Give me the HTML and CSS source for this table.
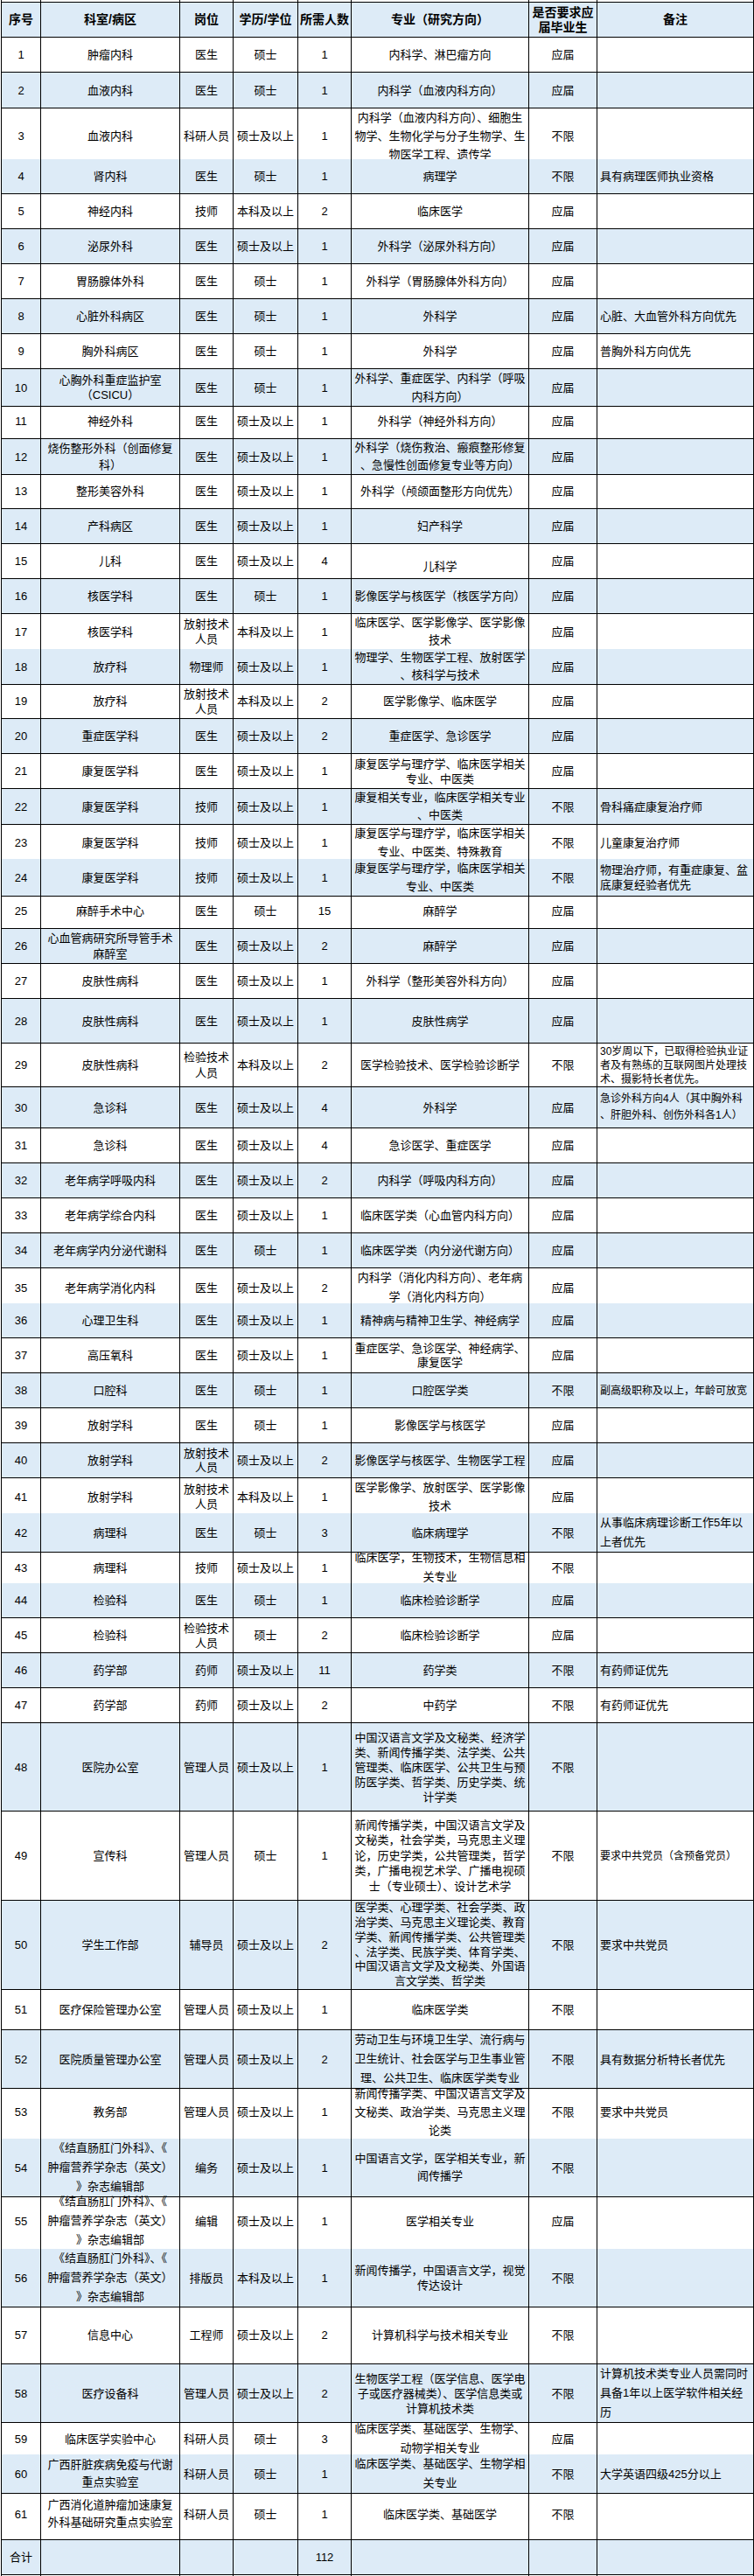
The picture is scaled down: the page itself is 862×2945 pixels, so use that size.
FILE: index.html
```
<!DOCTYPE html>
<html lang="zh-CN">
<head>
<meta charset="utf-8">
<title>招聘岗位表</title>
<link rel="stylesheet" href="styles.css">
</head>
<body>
<div class="sheet">
<div class="row stub"><div></div><div></div><div></div><div></div><div></div><div></div><div></div><div></div></div>
<div class="row b hd"><div>序号</div><div>科室/病区</div><div>岗位</div><div>学历/学位</div><div>所需人数</div><div>专业（研究方向）</div><div><span>是否要求应<br>届毕业生</span></div><div>备注</div></div>
<div class="row"><div>1</div><div>肿瘤内科</div><div>医生</div><div>硕士</div><div>1</div><div>内科学、淋巴瘤方向</div><div>应届</div><div class="rm"></div></div>
<div class="row b h41"><div>2</div><div>血液内科</div><div>医生</div><div>硕士</div><div>1</div><div>内科学（血液内科方向）</div><div>应届</div><div class="rm"></div></div>
<div class="row h58"><div>3</div><div>血液内科</div><div>科研人员</div><div>硕士及以上</div><div>1</div><div class="l21"><span>内科学（血液内科方向）、细胞生<br>物学、生物化学与分子生物学、生<br>物医学工程、遗传学</span></div><div>不限</div><div class="rm"></div></div>
<div class="row b"><div>4</div><div>肾内科</div><div>医生</div><div>硕士</div><div>1</div><div>病理学</div><div>不限</div><div class="rm">具有病理医师执业资格</div></div>
<div class="row"><div>5</div><div>神经内科</div><div>技师</div><div>本科及以上</div><div>2</div><div>临床医学</div><div>应届</div><div class="rm"></div></div>
<div class="row b"><div>6</div><div>泌尿外科</div><div>医生</div><div>硕士及以上</div><div>1</div><div>外科学（泌尿外科方向）</div><div>应届</div><div class="rm"></div></div>
<div class="row"><div>7</div><div>胃肠腺体外科</div><div>医生</div><div>硕士</div><div>1</div><div>外科学（胃肠腺体外科方向）</div><div>应届</div><div class="rm"></div></div>
<div class="row b"><div>8</div><div>心脏外科病区</div><div>医生</div><div>硕士</div><div>1</div><div>外科学</div><div>应届</div><div class="rm">心脏、大血管外科方向优先</div></div>
<div class="row"><div>9</div><div>胸外科病区</div><div>医生</div><div>硕士</div><div>1</div><div>外科学</div><div>应届</div><div class="rm">普胸外科方向优先</div></div>
<div class="row b"><div>10</div><div><span>心胸外科重症监护室<br>（CSICU）</span></div><div>医生</div><div>硕士</div><div>1</div><div class="l21"><span>外科学、重症医学、内科学（呼吸<br>内科方向）</span></div><div>应届</div><div class="rm"></div></div>
<div class="row"><div>11</div><div>神经外科</div><div>医生</div><div>硕士及以上</div><div>1</div><div>外科学（神经外科方向）</div><div>应届</div><div class="rm"></div></div>
<div class="row b"><div>12</div><div class="l19"><span>烧伤整形外科（创面修复<br>科）</span></div><div>医生</div><div>硕士及以上</div><div>1</div><div class="l20"><span>外科学（烧伤救治、瘢痕整形修复<br>、急慢性创面修复专业等方向）</span></div><div>应届</div><div class="rm"></div></div>
<div class="row"><div>13</div><div>整形美容外科</div><div>医生</div><div>硕士及以上</div><div>1</div><div>外科学（颅颌面整形方向优先）</div><div>应届</div><div class="rm"></div></div>
<div class="row b"><div>14</div><div>产科病区</div><div>医生</div><div>硕士及以上</div><div>1</div><div>妇产科学</div><div>应届</div><div class="rm"></div></div>
<div class="row"><div>15</div><div>儿科</div><div>医生</div><div>硕士及以上</div><div>4</div><div class="dn">儿科学</div><div>应届</div><div class="rm"></div></div>
<div class="row b"><div>16</div><div>核医学科</div><div>医生</div><div>硕士</div><div>1</div><div>影像医学与核医学（核医学方向）</div><div>应届</div><div class="rm"></div></div>
<div class="row"><div>17</div><div>核医学科</div><div><span>放射技术<br>人员</span></div><div>本科及以上</div><div>1</div><div class="l20"><span>临床医学、医学影像学、医学影像<br>技术</span></div><div>应届</div><div class="rm"></div></div>
<div class="row b"><div>18</div><div>放疗科</div><div>物理师</div><div>硕士及以上</div><div>1</div><div class="l20"><span>物理学、生物医学工程、放射医学<br>、核科学与技术</span></div><div>应届</div><div class="rm"></div></div>
<div class="row"><div>19</div><div>放疗科</div><div><span>放射技术<br>人员</span></div><div>本科及以上</div><div>2</div><div>医学影像学、临床医学</div><div>应届</div><div class="rm"></div></div>
<div class="row b"><div>20</div><div>重症医学科</div><div>医生</div><div>硕士及以上</div><div>2</div><div>重症医学、急诊医学</div><div>应届</div><div class="rm"></div></div>
<div class="row"><div>21</div><div>康复医学科</div><div>医生</div><div>硕士及以上</div><div>1</div><div><span>康复医学与理疗学、临床医学相关<br>专业、中医类</span></div><div>应届</div><div class="rm"></div></div>
<div class="row b"><div>22</div><div>康复医学科</div><div>技师</div><div>硕士及以上</div><div>1</div><div class="l20"><span>康复相关专业，临床医学相关专业<br>、中医类</span></div><div>不限</div><div class="rm">骨科痛症康复治疗师</div></div>
<div class="row"><div>23</div><div>康复医学科</div><div>技师</div><div>硕士及以上</div><div>1</div><div class="l21"><span>康复医学与理疗学，临床医学相关<br>专业、中医类、特殊教育</span></div><div>不限</div><div class="rm">儿童康复治疗师</div></div>
<div class="row b"><div>24</div><div>康复医学科</div><div>技师</div><div>硕士及以上</div><div>1</div><div class="l21"><span>康复医学与理疗学，临床医学相关<br>专业、中医类</span></div><div>不限</div><div class="rm"><span>物理治疗师，有重症康复、盆<br>底康复经验者优先</span></div></div>
<div class="row"><div>25</div><div>麻醉手术中心</div><div>医生</div><div>硕士</div><div>15</div><div>麻醉学</div><div>应届</div><div class="rm"></div></div>
<div class="row b"><div>26</div><div class="l18"><span>心血管病研究所导管手术<br>麻醉室</span></div><div>医生</div><div>硕士及以上</div><div>2</div><div>麻醉学</div><div>应届</div><div class="rm"></div></div>
<div class="row"><div>27</div><div>皮肤性病科</div><div>医生</div><div>硕士及以上</div><div>1</div><div>外科学（整形美容外科方向）</div><div>应届</div><div class="rm"></div></div>
<div class="row b h51"><div>28</div><div>皮肤性病科</div><div>医生</div><div>硕士及以上</div><div>1</div><div>皮肤性病学</div><div>应届</div><div class="rm"></div></div>
<div class="row h50"><div>29</div><div>皮肤性病科</div><div class="l18"><span>检验技术<br>人员</span></div><div>本科及以上</div><div>2</div><div>医学检验技术、医学检验诊断学</div><div>不限</div><div class="rm sm"><span>30岁周以下，已取得检验执业证<br>者及有熟练的互联网图片处理技<br>术、摄影特长者优先。</span></div></div>
<div class="row b h47"><div>30</div><div>急诊科</div><div>医生</div><div>硕士及以上</div><div>4</div><div>外科学</div><div>应届</div><div class="rm sm l19"><span>急诊外科方向4人（其中胸外科<br>、肝胆外科、创伤外科各1人）</span></div></div>
<div class="row"><div>31</div><div>急诊科</div><div>医生</div><div>硕士及以上</div><div>4</div><div>急诊医学、重症医学</div><div>应届</div><div class="rm"></div></div>
<div class="row b"><div>32</div><div>老年病学呼吸内科</div><div>医生</div><div>硕士及以上</div><div>2</div><div>内科学（呼吸内科方向）</div><div>应届</div><div class="rm"></div></div>
<div class="row"><div>33</div><div>老年病学综合内科</div><div>医生</div><div>硕士及以上</div><div>1</div><div>临床医学类（心血管内科方向）</div><div>应届</div><div class="rm"></div></div>
<div class="row b"><div>34</div><div>老年病学内分泌代谢科</div><div>医生</div><div>硕士</div><div>1</div><div>临床医学类（内分泌代谢方向）</div><div>应届</div><div class="rm"></div></div>
<div class="row"><div>35</div><div>老年病学消化内科</div><div>医生</div><div>硕士及以上</div><div>2</div><div class="l22"><span>内科学（消化内科方向）、老年病<br>学（消化内科方向）</span></div><div>应届</div><div class="rm"></div></div>
<div class="row b"><div>36</div><div>心理卫生科</div><div>医生</div><div>硕士及以上</div><div>1</div><div>精神病与精神卫生学、神经病学</div><div>应届</div><div class="rm"></div></div>
<div class="row"><div>37</div><div>高压氧科</div><div>医生</div><div>硕士及以上</div><div>1</div><div class="l16"><span>重症医学、急诊医学、神经病学、<br>康复医学</span></div><div>应届</div><div class="rm"></div></div>
<div class="row b"><div>38</div><div>口腔科</div><div>医生</div><div>硕士</div><div>1</div><div>口腔医学类</div><div>不限</div><div class="rm sm">副高级职称及以上，年龄可放宽</div></div>
<div class="row"><div>39</div><div>放射学科</div><div>医生</div><div>硕士</div><div>1</div><div>影像医学与核医学</div><div>应届</div><div class="rm"></div></div>
<div class="row b"><div>40</div><div>放射学科</div><div class="l16"><span>放射技术<br>人员</span></div><div>硕士及以上</div><div>2</div><div>影像医学与核医学、生物医学工程</div><div>应届</div><div class="rm"></div></div>
<div class="row"><div>41</div><div>放射学科</div><div><span>放射技术<br>人员</span></div><div>本科及以上</div><div>1</div><div class="l21"><span>医学影像学、放射医学、医学影像<br>技术</span></div><div>应届</div><div class="rm"></div></div>
<div class="row b"><div>42</div><div>病理科</div><div>医生</div><div>硕士</div><div>3</div><div>临床病理学</div><div>不限</div><div class="rm l22"><span>从事临床病理诊断工作5年以<br>上者优先</span></div></div>
<div class="row"><div>43</div><div>病理科</div><div>技师</div><div>硕士及以上</div><div>1</div><div class="l22"><span>临床医学，生物技术，生物信息相<br>关专业</span></div><div>不限</div><div class="rm"></div></div>
<div class="row b"><div>44</div><div>检验科</div><div>医生</div><div>硕士</div><div>1</div><div>临床检验诊断学</div><div>应届</div><div class="rm"></div></div>
<div class="row"><div>45</div><div>检验科</div><div><span>检验技术<br>人员</span></div><div>硕士</div><div>2</div><div>临床检验诊断学</div><div>应届</div><div class="rm"></div></div>
<div class="row b"><div>46</div><div>药学部</div><div>药师</div><div>硕士及以上</div><div>11</div><div>药学类</div><div>不限</div><div class="rm">有药师证优先</div></div>
<div class="row"><div>47</div><div>药学部</div><div>药师</div><div>硕士及以上</div><div>2</div><div>中药学</div><div>不限</div><div class="rm">有药师证优先</div></div>
<div class="row b h101"><div>48</div><div>医院办公室</div><div>管理人员</div><div>硕士及以上</div><div>1</div><div><span>中国汉语言文学及文秘类、经济学<br>类、新闻传播学类、法学类、公共<br>管理类、临床医学、公共卫生与预<br>防医学类、哲学类、历史学类、统<br>计学类</span></div><div>不限</div><div class="rm"></div></div>
<div class="row h102"><div>49</div><div>宣传科</div><div>管理人员</div><div>硕士</div><div>1</div><div class="l175"><span>新闻传播学类，中国汉语言文学及<br>文秘类，社会学类，马克思主义理<br>论，历史学类，公共管理类，哲学<br>类，广播电视艺术学、广播电视硕<br>士（专业硕士）、设计艺术学</span></div><div>不限</div><div class="rm sm">要求中共党员（含预备党员）</div></div>
<div class="row b h102"><div>50</div><div>学生工作部</div><div>辅导员</div><div>硕士及以上</div><div>2</div><div class="l165"><span>医学类、心理学类、社会学类、政<br>治学类、马克思主义理论类、教育<br>学类、新闻传播学类、公共管理类<br>、法学类、民族学类、体育学类、<br>中国汉语言文学及文秘类、外国语<br>言文学类、哲学类</span></div><div>不限</div><div class="rm">要求中共党员</div></div>
<div class="row h46"><div>51</div><div>医疗保险管理办公室</div><div>管理人员</div><div>硕士及以上</div><div>1</div><div>临床医学类</div><div>不限</div><div class="rm"></div></div>
<div class="row b h62"><div>52</div><div>医院质量管理办公室</div><div>管理人员</div><div>硕士及以上</div><div>2</div><div class="l22"><span>劳动卫生与环境卫生学、流行病与<br>卫生统计、社会医学与卫生事业管<br>理、公共卫生、临床医学类专业</span></div><div>不限</div><div class="rm">具有数据分析特长者优先</div></div>
<div class="row h62"><div>53</div><div>教务部</div><div>管理人员</div><div>硕士及以上</div><div>1</div><div class="l21"><span>新闻传播学类、中国汉语言文学及<br>文秘类、政治学类、马克思主义理<br>论类</span></div><div>不限</div><div class="rm">要求中共党员</div></div>
<div class="row b h61"><div>54</div><div class="l22"><span>《结直肠肛门外科》、《<br>肿瘤营养学杂志（英文）<br>》杂志编辑部</span></div><div>编务</div><div>硕士及以上</div><div>1</div><div class="l20"><span>中国语言文学，医学相关专业，新<br>闻传播学</span></div><div>不限</div><div class="rm"></div></div>
<div class="row h65"><div>55</div><div class="l22"><span>《结直肠肛门外科》、《<br>肿瘤营养学杂志（英文）<br>》杂志编辑部</span></div><div>编辑</div><div>硕士及以上</div><div>1</div><div>医学相关专业</div><div>应届</div><div class="rm"></div></div>
<div class="row b h65"><div>56</div><div class="l22"><span>《结直肠肛门外科》、《<br>肿瘤营养学杂志（英文）<br>》杂志编辑部</span></div><div>排版员</div><div>本科及以上</div><div>1</div><div><span>新闻传播学，中国语言文学，视觉<br>传达设计</span></div><div>不限</div><div class="rm"></div></div>
<div class="row h67"><div>57</div><div>信息中心</div><div>工程师</div><div>硕士及以上</div><div>2</div><div>计算机科学与技术相关专业</div><div>不限</div><div class="rm"></div></div>
<div class="row b h63"><div>58</div><div>医疗设备科</div><div>管理人员</div><div>硕士及以上</div><div>2</div><div><span>生物医学工程（医学信息、医学电<br>子或医疗器械类）、医学信息类或<br>计算机技术类</span></div><div>不限</div><div class="rm l22"><span>计算机技术类专业人员需同时<br>具备1年以上医学软件相关经<br>历</span></div></div>
<div class="row"><div>59</div><div>临床医学实验中心</div><div>科研人员</div><div>硕士</div><div>3</div><div class="l22"><span>临床医学类、基础医学、生物学、<br>动物学相关专业</span></div><div>应届</div><div class="rm"></div></div>
<div class="row b h39"><div>60</div><div class="l20"><span>广西肝脏疾病免疫与代谢<br>重点实验室</span></div><div>科研人员</div><div>硕士</div><div>1</div><div class="l22"><span>临床医学类、基础医学、生物学相<br>关专业</span></div><div>不限</div><div class="rm">大学英语四级425分以上</div></div>
<div class="row h59"><div>61</div><div class="l20"><span>广西消化道肿瘤加速康复<br>外科基础研究重点实验室</span></div><div>科研人员</div><div>硕士</div><div>1</div><div>临床医学类、基础医学</div><div>不限</div><div class="rm"></div></div>
<div class="row b"><div>合计</div><div></div><div></div><div></div><div>112</div><div></div><div></div><div class="rm"></div></div>
<div class="row stub end"><div></div><div></div><div></div><div></div><div></div><div></div><div></div><div></div></div>
</div>
</body>
</html>
```
FILE: styles.css
```
html, body {
  margin: 0;
  padding: 0;
  background: #ffffff;
}

body {
  font-family: "Liberation Sans", "Noto Sans CJK SC", sans-serif;
  font-size: 13px;
  color: #000000;
  overflow: hidden;
}

.sheet {
  width: 860px;
  margin-left: 1px;
  border-left: 1px solid #000000;
}

.row {
  display: grid;
  grid-template-columns: 45px 159px 61px 74px 61px 203px 78px 179px;
  height: 40px;
}

.row > div {
  box-sizing: border-box;
  border-right: 1px solid #000000;
  border-bottom: 1px solid #000000;
  display: flex;
  align-items: center;
  justify-content: center;
  text-align: center;
  padding: 0 2px;
  line-height: 17px;
  white-space: nowrap;
  min-width: 0;
}

.row.b > div {
  background: #ddebf7;
}

.row.hd > div {
  font-size: 14px;
  font-weight: bold;
}

.row.stub { height: 3px; }
.row.stub > div { padding: 0; }
.row.stub.end { height: 2px; }
.row.stub.end > div { border-bottom: none; }

.row.h39 { height: 39px; }
.row.h41 { height: 41px; }
.row.h46 { height: 46px; }
.row.h47 { height: 47px; }
.row.h50 { height: 50px; }
.row.h51 { height: 51px; }
.row.h58 { height: 58px; }
.row.h59 { height: 59px; }
.row.h61 { height: 61px; }
.row.h62 { height: 62px; }
.row.h63 { height: 63px; }
.row.h65 { height: 65px; }
.row.h67 { height: 67px; }
.row.h101 { height: 101px; }
.row.h102 { height: 102px; }

.row > div.rm {
  justify-content: flex-start;
  text-align: left;
  padding-left: 3px;
}

.row > div.sm { font-size: 12px; line-height: 16px; }
.row > div.l16 { line-height: 16px; }
.row > div.l165 { line-height: 16.8px; }
.row > div.l175 { line-height: 17.5px; }
.row > div.l18 { line-height: 18px; }
.row > div.l19 { line-height: 19px; }
.row > div.l20 { line-height: 20px; }
.row > div.l21 { line-height: 21px; }
.row > div.l22 { line-height: 22px; }

.row > div.dn { padding-top: 12px; }
```
